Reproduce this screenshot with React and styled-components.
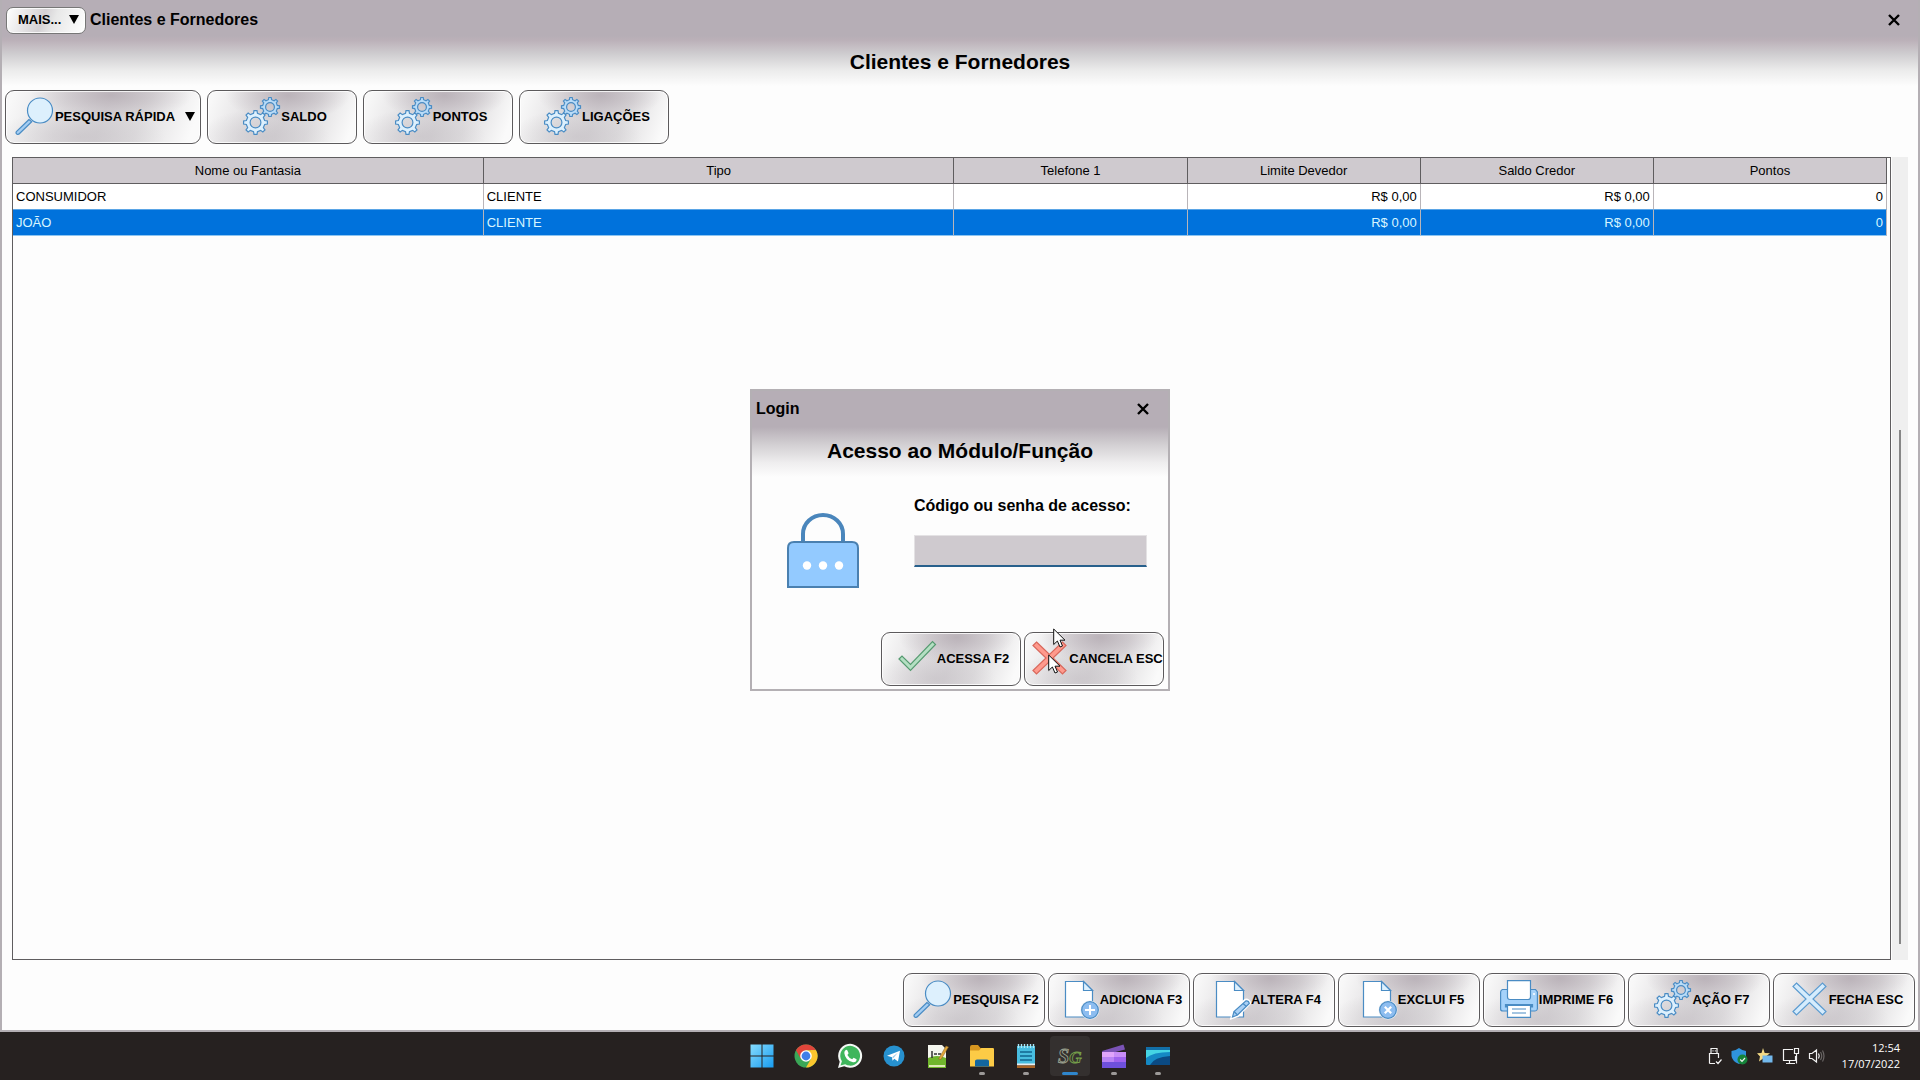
import React, { useState } from 'react';
import styled, { createGlobalStyle } from 'styled-components';

const GlobalStyle = createGlobalStyle`
  * {
    box-sizing: border-box;
  }

  body {
    margin: 0;
    font-family: "Liberation Sans", Arial, sans-serif;
    font-size: 13px;
    color: #000;
    background: #fdfdfd;
  }
`;

const Screen = styled.div`
  display: flex;
  flex-direction: column;
  min-height: 100vh;
`;

const Window = styled.main`
  flex: 1;
  display: flex;
  flex-direction: column;
  background: #fdfdfd;
  border: 2px solid #b4afb4;
  border-top: none;
`;

const WindowHeader = styled.header`
  background: linear-gradient(#b6aeb6 0, #b6aeb6 36px, #bbb0b8 40px, #cfcdd0 54px, #ebebeb 70px, #fdfdfd 86px);
  height: 86px;
`;

const TitleBar = styled.div`
  display: flex;
  align-items: center;
  gap: 4px;
  height: 40px;
  padding: 0 14px 0 4px;
`;

const WindowName = styled.span`
  flex: 1;
  font-size: 16px;
  font-weight: bold;
`;

const Heading = styled.h1`
  margin: 0;
  font-size: 21px;
  line-height: 24px;
  padding-top: ${props => props.$top || '10px'};
  text-align: center;
`;

const CloseButton = styled.button`
  display: flex;
  align-items: center;
  justify-content: center;
  width: 20px;
  height: 20px;
  padding: 0;
  border: none;
  background: none;
`;

const glossy = `
  border: 1px solid #5c5a5c;
  background:
    radial-gradient(ellipse 42% 50% at 54% 8%, rgba(174, 164, 172, 0.7), transparent),
    radial-gradient(ellipse 44% 55% at 38% 88%, rgba(192, 187, 192, 0.5), transparent),
    linear-gradient(110deg, #f8f8f8 4%, #e2e0e2 30%, #d8d5d8 50%, #dfdddf 68%, #fafafa 94%);
  box-shadow: inset 0 0 0 1px rgba(255, 255, 255, 0.8);
  font-family: inherit;
  font-size: 13px;
  font-weight: bold;
  color: #000;
  white-space: nowrap;
`;

const MoreButton = styled.button`
  ${glossy}
  display: flex;
  align-items: center;
  justify-content: space-between;
  width: 80px;
  height: 27px;
  padding: 0 6px 2px 11px;
  border-color: #777;
  border-radius: 7px;
  background: linear-gradient(110deg, #fff, #d4d1d4 45%, #e8e8e8 60%, #fff);
`;

const ActionButton = styled.button`
  ${glossy}
  display: flex;
  align-items: center;
  justify-content: center;
  gap: 2px;
  width: ${props => props.$width};
  height: 54px;
  padding: 0 0 2px 4px;
  border-radius: 9px;

  svg {
    flex: none;
    overflow: visible;
  }
`;

const Caret = styled.span`
  width: 0;
  border: 5px solid transparent;
  border-top: 9px solid #000;
  border-bottom: none;
  margin-left: ${props => props.$gap || '0'};
`;

const Toolbar = styled.nav`
  display: flex;
  gap: 6px;
  padding: 4px 3px 0;
`;

const ListArea = styled.section`
  flex: 1;
  display: flex;
  padding: 13px 10px 13px 10px;
`;

const ListBox = styled.div`
  flex: 1;
  border: 1px solid #5f5d5f;
  padding-right: 3px;
`;

const Table = styled.table`
  width: 100%;
  table-layout: fixed;
  border-collapse: separate;
  border-spacing: 0;

  th,
  td {
    height: 26px;
    padding: 0 3px;
    border-right: 1px solid #b9b5b9;
  }

  th {
    background: #cfcacf;
    font-weight: normal;
    border-right-color: #5f5d5f;
    border-bottom: 1px solid #5f5d5f;
  }
`;

const Row = styled.tr`
  background: ${props => (props.$selected ? '#0072dc' : '#fff')};
  color: ${props => (props.$selected ? '#d8f6ff' : '#000')};

  td {
    border-bottom: 1px solid ${props => (props.$selected ? '#8cc4f0' : '#5aa5e6')};
  }
`;

const Cell = styled.td`
  text-align: ${props => (props.$number ? 'right' : 'left')};
`;

const ScrollTrack = styled.div`
  display: flex;
  justify-content: center;
  width: 16px;
  margin-left: 1px;
  padding: 273px 0 16px;
  background: #efefef;
`;

const ScrollThumb = styled.div`
  width: 2px;
  background: #868686;
`;

const Footer = styled.footer`
  display: flex;
  justify-content: flex-end;
  gap: 3px;
  padding: 0 3px 3px;
`;

const Overlay = styled.div`
  position: fixed;
  inset: 0;
  display: flex;
  align-items: center;
  justify-content: center;
`;

const Dialog = styled.form`
  position: relative;
  width: 420px;
  border: 2px solid #b4b0b4;
  background: #fdfdfd;
`;

const DialogHeader = styled.div`
  height: 88px;
  background: linear-gradient(#b6aeb6 0, #b6aeb6 36px, #d3d0d3 54px, #efeeef 72px, #fdfdfd 86px);
`;

const DialogTitleBar = styled.div`
  display: flex;
  align-items: center;
  height: 36px;
  padding: 0 15px 0 4px;
`;

const DialogBody = styled.div`
  display: grid;
  grid-template-columns: 72px 233px;
  column-gap: 55px;
  height: 153px;
  padding: 17px 0 0 35px;

  > svg {
    margin-top: 17px;
  }
`;

const Field = styled.div`
  display: flex;
  flex-direction: column;
  gap: 19px;

  label {
    font-size: 16px;
    line-height: 20px;
    font-weight: bold;
    white-space: nowrap;
  }

  input {
    height: 32px;
    border: 1px solid #e4e2e4;
    border-bottom: 2px solid #28608c;
    padding: 0 6px;
    font: inherit;
    background: #cfcacf;
    outline: none;
  }
`;

const DialogActions = styled.div`
  display: flex;
  justify-content: flex-end;
  gap: 3px;
  padding: 0 4px 3px;
`;

const Pointer = styled.svg`
  position: absolute;
  left: ${props => props.$x}px;
  top: ${props => props.$y}px;
`;

const Taskbar = styled.div`
  display: grid;
  grid-template-columns: 1fr auto 1fr;
  align-items: center;
  height: 48px;
  background: #262120;
`;

const Apps = styled.div`
  grid-column: 2;
  display: flex;
  gap: 4px;
`;

const AppButton = styled.button`
  position: relative;
  display: flex;
  align-items: center;
  justify-content: center;
  width: 40px;
  height: 40px;
  padding: 0;
  border: none;
  border-radius: 4px;
  background: ${props => (props.$active ? '#34302f' : 'none')};

  &::after {
    content: '';
    display: ${props => (props.$open ? 'block' : 'none')};
    position: absolute;
    bottom: 1px;
    width: ${props => (props.$active ? '16px' : '6px')};
    height: 3px;
    border-radius: 2px;
    background: ${props => (props.$active ? '#2f86cc' : '#9c9998')};
  }
`;

const Tray = styled.div`
  display: flex;
  justify-content: flex-end;
  align-items: center;
  gap: 8px;
  padding-right: 20px;
`;

const Clock = styled.time`
  margin-left: 8px;
  font-family: "Open Sans", "Noto Sans", sans-serif;
  font-size: 11px;
  line-height: 16px;
  text-align: right;
  color: #fff;
`;

const CloseIcon = () => (
  <svg width="12" height="12" viewBox="0 0 12 12" stroke="#000" strokeWidth="2.4">
    <path d="M1 1 11 11M11 1 1 11" />
  </svg>
);

const Icon = ({ children, shift = 0 }) => (
  <svg
    width="38"
    height="38"
    viewBox={`${-shift} 0 38 38`}
    fill="#ddf0fd"
    stroke="#4a8cc4"
    strokeWidth="1.2"
    aria-hidden="true"
  >
    {children}
  </svg>
);

const SearchIcon = () => (
  <Icon>
    <path d="M14 22.5 1.4 34.6Q.4 36.400 2 37.200 3.500 37.800 4.600 36.500L16.700 24.800Z" fill="#a5cdf2" />
    <circle cx="25" cy="13.500" r="12.500" />
  </Icon>
);

// Outline of a toothed wheel, with the hole cut by the even-odd rule
const gearPath = (cx, cy, r, hole) => {
  const teeth = 8;
  const step = (Math.PI * 2) / teeth;
  const at = (radius, angle) =>
    `${(cx + radius * Math.cos(angle)).toFixed(2)} ${(cy + radius * Math.sin(angle)).toFixed(2)}`;
  const points = [];
  for (let i = 0; i < teeth; i++) {
    const a = i * step + Math.PI / 2;
    points.push(at(r * 0.78, a - step * 0.27), at(r, a - step * 0.16), at(r, a + step * 0.16), at(r * 0.78, a + step * 0.27));
  }
  return `M${points.join('L')}ZM${cx - hole} ${cy}a${hole} ${hole} 0 1 0 ${hole * 2} 0a${hole} ${hole} 0 1 0 ${-hole * 2} 0Z`;
};

const GearsIcon = () => (
  <Icon shift={2}>
    <g fillRule="evenodd">
      <path d={gearPath(27, 10, 9.6, 4.4)} fill="#b9dcf8" />
      <path d={gearPath(12.5, 25.5, 12, 5.4)} />
    </g>
  </Icon>
);

const Sheet = () => (
  <g>
    <path d="M3.500 1.500H21.500L30.500 10.500V37H3.500Z" fill="#fff" />
    <path d="M21.500 1.500V10.500H30.500Z" />
  </g>
);

const AddIcon = () => (
  <Icon shift={2}>
    <Sheet />
    <circle cx="28" cy="30" r="9.500" fill="#e8eef4" stroke="none" />
    <circle cx="28" cy="30" r="8.300" fill="#8dbdf0" />
    <path d="M23 30H33M28 25V35" stroke="#fff" strokeWidth="2" />
  </Icon>
);

const EditIcon = () => (
  <Icon shift={2}>
    <Sheet />
    <path d="M19 37.500 21 31 32.500 20.200Q35 19.500 36.800 23L24.500 35.600Z" fill="#a9d0f5" stroke="#fff" strokeWidth="3" />
    <path d="M19.500 37 21 31.500 33 20.800Q35.800 20.500 36.300 23.500L24.500 35Z" fill="#a9d0f5" />
    <path d="M21 31.500 24.500 35M30 23.500 33.500 26.500" />
  </Icon>
);

const DeleteIcon = () => (
  <Icon shift={2}>
    <Sheet />
    <circle cx="28" cy="30" r="9.500" fill="#e8eef4" stroke="none" />
    <circle cx="28" cy="30" r="8.300" fill="#8dbdf0" />
    <path d="M24.800 26.800 31.200 33.200M31.200 26.800 24.800 33.200" stroke="#fff" strokeWidth="2.200" />
  </Icon>
);

const PrintIcon = () => (
  <Icon shift={1}>
    <path d="M2.500 9.500H35.500L37.400 12V29Q37 31 35 31H3Q.6 31 .6 29V12Q.8 10 2.500 9.500Z" fill="#a5d2fa" />
    <path d="M7.500 .6H30.500V17Q30.500 19.500 28 19.500H10Q7.500 19.500 7.500 17Z" fill="#fff" />
    <path d="M5.500 24.500H32.500V27H5.500Z" fill="#4a8cc4" />
    <path d="M7.500 25.500H30.500V37.400H7.500Z" fill="#fff" />
    <path d="M12 29H26M12 33H26" />
    <circle cx="34" cy="14" r="1" fill="#fff" stroke="none" />
  </Icon>
);

const CrossIcon = ({ fill, stroke }) => (
  <Icon shift={2}>
    <path
      d="M5.500 3 18.500 15.500 31.500 3 35 6.500 22 19 35 31.500 31.500 35 18.500 22.500 5.500 35 2 31.500 15 19 2 6.500Z"
      fill={fill}
      stroke={stroke}
    />
  </Icon>
);

const CheckIcon = () => (
  <Icon shift={1}>
    <path d="M1 20 4 17 12.500 25.500 34.500 2.500 37.500 5.500 12.500 31.500Z" fill="#b4dfc2" stroke="#559a70" />
  </Icon>
);

const LockIcon = () => (
  <svg width="72" height="75" viewBox="0 0 72 75" aria-hidden="true">
    <path d="M16 30V21A20 19 0 0 1 56 21V30" fill="none" stroke="#4a86bc" strokeWidth="4" />
    <path d="M1 74V35Q1 29 7 29H65Q71 29 71 35V74Z" fill="#93caff" stroke="#4a80b0" strokeWidth="2" />
    <g fill="#fff">
      <circle cx="20" cy="52.500" r="4.200" />
      <circle cx="36" cy="52.500" r="4.200" />
      <circle cx="52" cy="52.500" r="4.200" />
    </g>
  </svg>
);

const PointerIcon = ({ x, y }) => (
  <Pointer $x={x} $y={y} width="13" height="20" viewBox="0 0 13 20" aria-hidden="true">
    <path d="M.7 1V16.500L4.400 13 7 19 9.500 18 7 12.200H12Z" fill="#fff" stroke="#111" />
  </Pointer>
);

const AppIcon = ({ children }) => (
  <svg width="26" height="26" viewBox="0 0 26 26" aria-hidden="true">{children}</svg>
);

const WindowsIcon = () => (
  <AppIcon>
    <defs>
      <linearGradient id="win" x2="1" y2="1"><stop stopColor="#86dcff" /><stop offset="1" stopColor="#189cf0" /></linearGradient>
    </defs>
    <path d="M1.500 1.500H12.500V12.500H1.500ZM13.500 1.500H24.500V12.500H13.500ZM1.500 13.500H12.500V24.500H1.500ZM13.500 13.500H24.500V24.500H13.500Z" fill="url(#win)" />
  </AppIcon>
);

const ChromeIcon = () => (
  <AppIcon>
    <circle cx="13" cy="13" r="11.500" fill="#3aa757" />
    <path d="M3 7.200A11.500 11.500 0 0 1 23 7.200H13L8 16Z" fill="#e0453a" />
    <path d="M23 7.200A11.500 11.500 0 0 1 13 24.500L18 15.800V7.200Z" fill="#fbc62e" />
    <path d="M13 7.200H23L18 15.800Z" fill="#fbc62e" />
    <circle cx="13" cy="13" r="5.800" fill="#fff" />
    <circle cx="13" cy="13" r="4.400" fill="#3f7fe8" />
  </AppIcon>
);

const WhatsappIcon = () => (
  <AppIcon>
    <path d="M1 25 2.700 18.800A12 12 0 1 1 7.200 23.300Z" fill="#f4f8f5" />
    <path d="M3.500 22.500 4.900 18.200A9.900 9.900 0 1 1 8.200 21.300Z" fill="#3fb65c" />
    <path d="M8.500 7.200Q9.300 6.400 10.300 7.300L11.600 10.200 10.400 12Q12 15.200 15.200 16.200L16.600 14.700 19.600 16.200Q19.500 19.500 16 19.200 8.200 17.500 7.300 10Q7.400 8 8.500 7.200Z" fill="#fff" />
  </AppIcon>
);

const TelegramIcon = () => (
  <AppIcon>
    <circle cx="13" cy="13" r="10.500" fill="#2791cf" />
    <path d="M6 12.800 19 7.700 17 18.500 13.300 15.800 11.500 17.700 11 14.300Z" fill="#fff" />
    <path d="M11 14.300 17 9.500 12.500 15Z" fill="#9bc9e6" />
  </AppIcon>
);

const NotepadPlusIcon = () => (
  <AppIcon>
    <path d="M3 2H17L21 6V25H3Z" fill="#f5f6ee" />
    <path d="M3 15Q12 11 21 15V25H3Z" fill="#70b62c" />
    <path d="M4 22H20V24H4Z" fill="#dfeab8" />
    <path d="M7 8V15M9 11H12M13 11H16" stroke="#333" strokeWidth="1.500" />
    <path d="M13.500 16 21 3 23.500 4 16 16.500Z" fill="#e1a63a" stroke="#806024" strokeWidth=".5" />
  </AppIcon>
);

const FolderIcon = () => (
  <AppIcon>
    <path d="M1 4Q1 2 3 2H9L11.500 5H23Q25 5 25 7V12H1Z" fill="#d79620" />
    <path d="M1 7.500H10L12.500 5H24Q25 5 25 6.500V23.500H1Z" fill="#fccb46" />
    <path d="M6 23.500V18Q6 16.500 8 16.500H18Q20 16.500 20 18V23.500Z" fill="#14679f" />
  </AppIcon>
);

const NotesIcon = () => (
  <AppIcon>
    <path d="M4 3H22V22H4Z" fill="#48bde0" />
    <path d="M4 20.500H22V22.500H4Z" fill="#e8eef0" />
    <path d="M4 22.500H22V25H4Z" fill="#a76326" />
    <path d="M5.500 1V5M8.500 1V5M11.500 1V5M14.500 1V5M17.500 1V5M20.500 1V5" stroke="#a9e8f8" strokeWidth="1.400" />
    <path d="M7 9H19M7 13H19M7 17H19" stroke="#11648f" strokeWidth="1.700" />
  </AppIcon>
);

const SgIcon = () => (
  <AppIcon>
    <text
      x="1"
      y="20"
      fontFamily="Liberation Serif, serif"
      fontSize="20"
      fontStyle="italic"
      fontWeight="bold"
      fill="none"
      strokeWidth=".9"
    >
      <tspan stroke="#9aa08e">S</tspan>
      <tspan stroke="#76a04a" fontSize="17">G</tspan>
    </text>
  </AppIcon>
);

const ClipIcon = () => (
  <AppIcon>
    <path d="M1 8 22.500 1.500 24 6.500 3 12Z" fill="#7b53b6" />
    <path d="M1 9H25V24Q25 25 24 25H2Q1 25 1 24Z" fill="#a063ee" />
    <path d="M1 9H13V14H1Z" fill="#e0a4fb" />
    <path d="M13 9H25V14H13Z" fill="#c88df7" />
    <path d="M1 19H25V24Q25 25 24 25H2Q1 25 1 24Z" fill="#6e50dc" />
    <path d="M1 14H13V19H1Z" fill="#b983f5" />
  </AppIcon>
);

const DesktopIcon = () => (
  <AppIcon>
    <path d="M1 5Q1 4 2 4H24Q25 4 25 5V21Q25 22 24 22H2Q1 22 1 21Z" fill="#1589c4" />
    <path d="M1 15Q8 9 25 9V4H1Z" fill="#45d5e4" />
    <path d="M1 4H25V7H1Z" fill="#126fa8" />
    <path d="M5 22Q9 14 25 13V22Z" fill="#0b4a83" />
  </AppIcon>
);

const TrayIcon = ({ children, size = 18 }) => (
  <svg width={size} height="18" viewBox={`0 0 ${size} 18`} fill="none" stroke="#f2f2f2" strokeWidth="1.200" aria-hidden="true">
    {children}
  </svg>
);

const toolbarActions = [
  { label: 'SALDO', icon: GearsIcon },
  { label: 'PONTOS', icon: GearsIcon },
  { label: 'LIGAÇÕES', icon: GearsIcon }
];

const footerActions = [
  { label: 'PESQUISA F2', icon: SearchIcon },
  { label: 'ADICIONA F3', icon: AddIcon },
  { label: 'ALTERA F4', icon: EditIcon },
  { label: 'EXCLUI F5', icon: DeleteIcon },
  { label: 'IMPRIME F6', icon: PrintIcon },
  { label: 'AÇÃO F7', icon: GearsIcon },
  { label: 'FECHA ESC', icon: () => <CrossIcon fill="#d5ecfd" stroke="#5b9bd0" /> }
];

const columns = [
  { title: 'Nome ou Fantasia', width: '25.12%' },
  { title: 'Tipo', width: '25.12%' },
  { title: 'Telefone 1', width: '12.44%' },
  { title: 'Limite Devedor', width: '12.44%' },
  { title: 'Saldo Credor', width: '12.44%' },
  { title: 'Pontos', width: '12.44%' }
];

const clients = [
  { name: 'CONSUMIDOR', type: 'CLIENTE', phone: '', limit: 'R$ 0,00', balance: 'R$ 0,00', points: 0 },
  { name: 'JOÃO', type: 'CLIENTE', phone: '', limit: 'R$ 0,00', balance: 'R$ 0,00', points: 0 }
];

const apps = [
  { name: 'Iniciar', icon: WindowsIcon },
  { name: 'Chrome', icon: ChromeIcon },
  { name: 'WhatsApp', icon: WhatsappIcon },
  { name: 'Telegram', icon: TelegramIcon },
  { name: 'Notepad++', icon: NotepadPlusIcon },
  { name: 'Arquivos', icon: FolderIcon, open: true },
  { name: 'Bloco de notas', icon: NotesIcon, open: true },
  { name: 'SG', icon: SgIcon, open: true, active: true },
  { name: 'Clipchamp', icon: ClipIcon, open: true },
  { name: 'Área de trabalho', icon: DesktopIcon, open: true }
];

const LoginDialog = () => {
  const [password, setPassword] = useState('');

  return (
    <Overlay>
      <Dialog role="dialog" aria-label="Login" onSubmit={e => e.preventDefault()}>
        <DialogHeader>
          <DialogTitleBar>
            <WindowName>Login</WindowName>
            <CloseButton type="button" aria-label="Fechar"><CloseIcon /></CloseButton>
          </DialogTitleBar>
          <Heading as="h2" $top="12px">Acesso ao Módulo/Função</Heading>
        </DialogHeader>
        <DialogBody>
          <LockIcon />
          <Field>
            <label htmlFor="password">Código ou senha de acesso:</label>
            <input
              id="password"
              type="password"
              value={password}
              onChange={e => setPassword(e.target.value)}
            />
          </Field>
        </DialogBody>
        <DialogActions>
          <ActionButton type="submit" $width="140px"><CheckIcon />ACESSA F2</ActionButton>
          <ActionButton type="button" $width="140px">
            <CrossIcon fill="#ff9a8d" stroke="#d9685c" />CANCELA ESC
          </ActionButton>
        </DialogActions>
        <PointerIcon x={301} y={237} />
        <PointerIcon x={296} y={263} />
      </Dialog>
    </Overlay>
  );
};

const App = () => {
  const [selected, setSelected] = useState(1);

  return (
    <Screen>
      <GlobalStyle />
      <Window>
        <WindowHeader>
          <TitleBar>
            <MoreButton>MAIS...<Caret /></MoreButton>
            <WindowName>Clientes e Fornedores</WindowName>
            <CloseButton aria-label="Fechar janela"><CloseIcon /></CloseButton>
          </TitleBar>
          <Heading>Clientes e Fornedores</Heading>
        </WindowHeader>

        <Toolbar>
          <ActionButton $width="196px"><SearchIcon />PESQUISA RÁPIDA<Caret $gap="8px" /></ActionButton>
          {toolbarActions.map(action => (
            <ActionButton key={action.label} $width="150px">
              <action.icon />
              {action.label}
            </ActionButton>
          ))}
        </Toolbar>

        <ListArea>
          <ListBox>
            <Table>
              <colgroup>
                {columns.map(column => <col key={column.title} width={column.width} />)}
              </colgroup>
              <thead>
                <tr>
                  {columns.map(column => <th key={column.title}>{column.title}</th>)}
                </tr>
              </thead>
              <tbody>
                {clients.map((client, index) => (
                  <Row key={client.name} $selected={index === selected} onClick={() => setSelected(index)}>
                    <Cell>{client.name}</Cell>
                    <Cell>{client.type}</Cell>
                    <Cell>{client.phone}</Cell>
                    <Cell $number>{client.limit}</Cell>
                    <Cell $number>{client.balance}</Cell>
                    <Cell $number>{client.points}</Cell>
                  </Row>
                ))}
              </tbody>
            </Table>
          </ListBox>
          <ScrollTrack><ScrollThumb /></ScrollTrack>
        </ListArea>

        <Footer>
          {footerActions.map(action => (
            <ActionButton key={action.label} $width="142px">
              <action.icon />
              {action.label}
            </ActionButton>
          ))}
        </Footer>
      </Window>

      <Taskbar>
        <Apps>
          {apps.map(app => (
            <AppButton key={app.name} aria-label={app.name} $open={app.open} $active={app.active}>
              <app.icon />
            </AppButton>
          ))}
        </Apps>
        <Tray>
          <TrayIcon size={14}>
            <path d="M3 6V1.500H9V6M1.500 16.500V6.500H10.500V11M1.500 16.500H7M8 14.500 10 16.500 13.500 12.500M4.500 3.800H5.500M6.800 3.800H7.800" />
          </TrayIcon>
          <TrayIcon>
            <path d="M1.500 4Q6 3.500 9 1 12 3.500 16 4V9Q15 14.500 9 17 2 14 1.500 9Z" fill="#2f93dc" stroke="none" />
            <circle cx="12.500" cy="12.500" r="5" fill="#16843a" stroke="none" />
            <path d="M10.200 12.500 12 14.300 15 11" />
          </TrayIcon>
          <TrayIcon>
            <path d="M7 1 8.700 6 14 6.300 9.800 9.500 11 14.500 7 11.600 3 14.500 4 9.500 1 6.300 5.500 6Z" fill="#f3d985" stroke="none" />
            <path d="M6.500 8.500H16.500V15.500H6.500Z" fill="#72b8ec" stroke="none" />
          </TrayIcon>
          <TrayIcon>
            <path d="M11 2.500H1.500V13.500H13.500V9M7.500 13.500V16.500M4 16.500H13M12.500 1.500H16.500V6.500H12.500ZM14.500 6.500V16.500" />
          </TrayIcon>
          <TrayIcon>
            <path d="M1.500 6.500H4L8.500 3V15L4 11.500H1.500ZM10.500 6.500Q12 9 10.500 11.500" />
            <path d="M12.500 5Q15 9 12.500 13M14.500 3.500Q17.500 9 14.500 14.500" stroke="#6a6665" />
          </TrayIcon>
          <Clock>12:54<br />17/07/2022</Clock>
        </Tray>
      </Taskbar>

      <LoginDialog />
    </Screen>
  );
};

export default App;
